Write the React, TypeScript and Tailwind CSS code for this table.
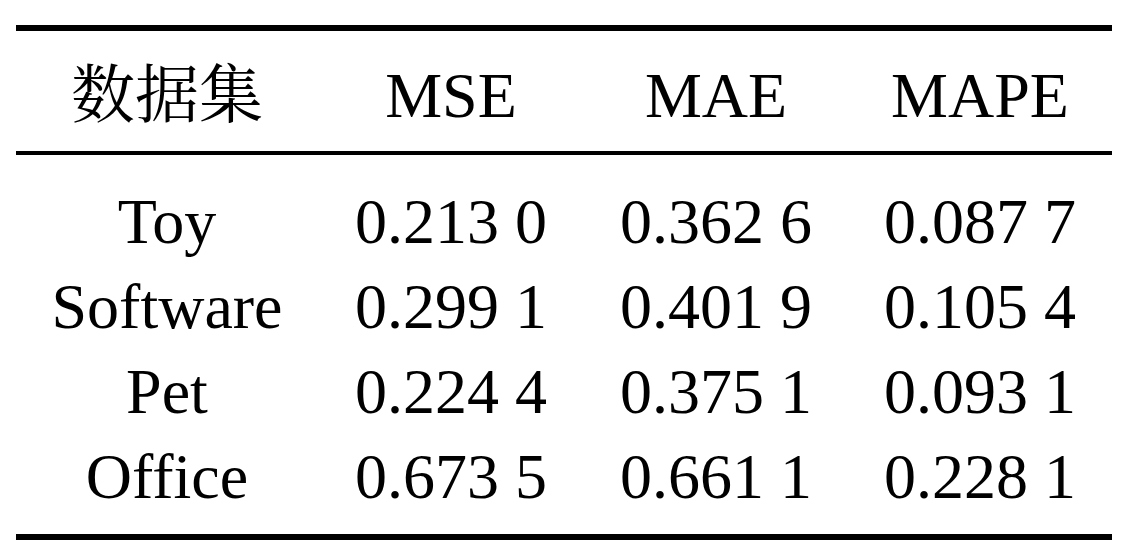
import React from 'react';

const rows = [
    { name: 'Toy', mse: '0.213 0', mae: '0.362 6', mape: '0.087 7' },
    { name: 'Software', mse: '0.299 1', mae: '0.401 9', mape: '0.105 4' },
    { name: 'Pet', mse: '0.224 4', mae: '0.375 1', mape: '0.093 1' },
    { name: 'Office', mse: '0.673 5', mae: '0.661 1', mape: '0.228 1' },
];

const cols = 'grid grid-cols-[302px_266px_264px_264px]';

export default function App() {
    return (
        <div
            className="w-[1128px] h-[555px] bg-white text-black overflow-hidden"
            style={{ fontFamily: '"Liberation Serif", "Noto Serif CJK SC", "Noto Sans CJK SC", serif' }}
        >
            <div className="pt-[25px] px-4">
                <div className="h-[6px] bg-black" />

                <div className={`${cols} pt-[22px] pb-[13px] text-[64px] leading-[85px] h-[120px]`}>
                    <div className="text-center">数据集</div>
                    <div className="text-center">MSE</div>
                    <div className="text-center">MAE</div>
                    <div className="text-center">MAPE</div>
                </div>

                <div className="h-[4px] bg-black" />

                <div className="pt-[24px] pb-[15px]">
                    {rows.map((r) => (
                        <div key={r.name} className={`${cols} h-[85px] text-[64px] leading-[85px] whitespace-pre`}>
                            <div className="text-center">{r.name}</div>
                            <div className="text-center">{r.mse}</div>
                            <div className="text-center">{r.mae}</div>
                            <div className="text-center">{r.mape}</div>
                        </div>
                    ))}
                </div>

                <div className="h-[6px] bg-black" />
            </div>
        </div>
    );
}
